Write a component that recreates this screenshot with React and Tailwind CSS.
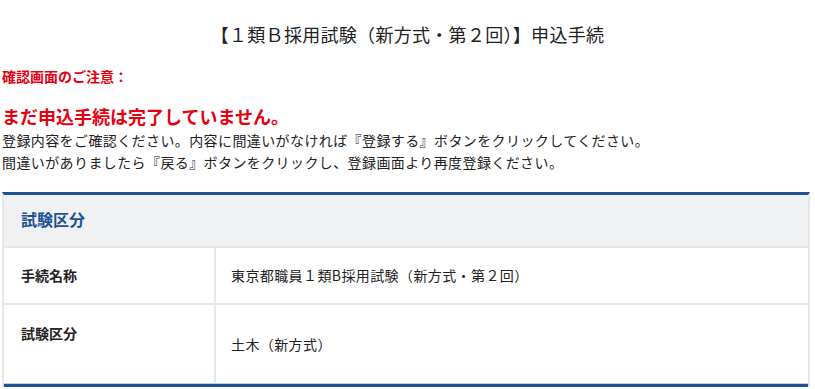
const font = { fontFamily: '"Noto Sans CJK JP", "Noto Sans", sans-serif' };

const Row = ({ label, value, tall }) => (
  <div className="flex border-t-2 border-[#e6e7e9]">
    <div className={`w-[212px] shrink-0 pl-[17px] font-bold text-[14px] text-[#222] border-r-2 border-[#e6e7e9] ${tall ? 'h-[78px] pt-[18px]' : 'h-[55px] flex items-center'}`}>
      {label}
    </div>
    <div className="flex-1 pl-[15px] flex items-center text-[14px] tracking-[0.4px] text-[#222]">
      {value}
    </div>
  </div>
);

export default function App() {
  return (
    <div className="w-[815px] h-[389px] bg-white overflow-hidden" style={font}>
      <h1 className="pt-[21px] text-center text-[18px] leading-[26px] tracking-[0.3px] text-[#222]">
        【１類Ｂ採用試験（新方式・第２回）】申込手続
      </h1>

      <div className="mt-[19px] pl-[2px]">
        <p className="text-[14px] font-bold leading-[20px] text-[#e60012]">確認画面のご注意：</p>
        <p className="mt-[18px] text-[18px] font-bold leading-[24px] text-[#e60012]">
          まだ申込手続は完了していません。
        </p>
        <p className="mt-[1px] text-[14px] leading-[22px] tracking-[0.4px] text-[#222]">
          登録内容をご確認ください。内容に間違いがなければ『登録する』ボタンをクリックしてください。
        </p>
        <p className="text-[14px] leading-[22px] tracking-[0.4px] text-[#222]">
          間違いがありましたら『戻る』ボタンをクリックし、登録画面より再度登録ください。
        </p>
      </div>

      <div className="mt-[19px] ml-[2px] w-[808px] border-t-[3px] border-[#1d5193] border-x-2 border-x-[#e6e7e9]">
        <div className="h-[51px] bg-[#f0f1f3] pl-[17px] pb-[3px] flex items-center text-[16px] font-bold text-[#1d5193]">
          試験区分
        </div>
        <Row label="手続名称" value="東京都職員１類B採用試験（新方式・第２回）" />
        <Row label="試験区分" value="土木（新方式）" tall />
        <div className="h-px bg-[#bcd3ea]" />
        <div className="h-[3px] bg-[#1d5193]" />
      </div>
    </div>
  );
}
